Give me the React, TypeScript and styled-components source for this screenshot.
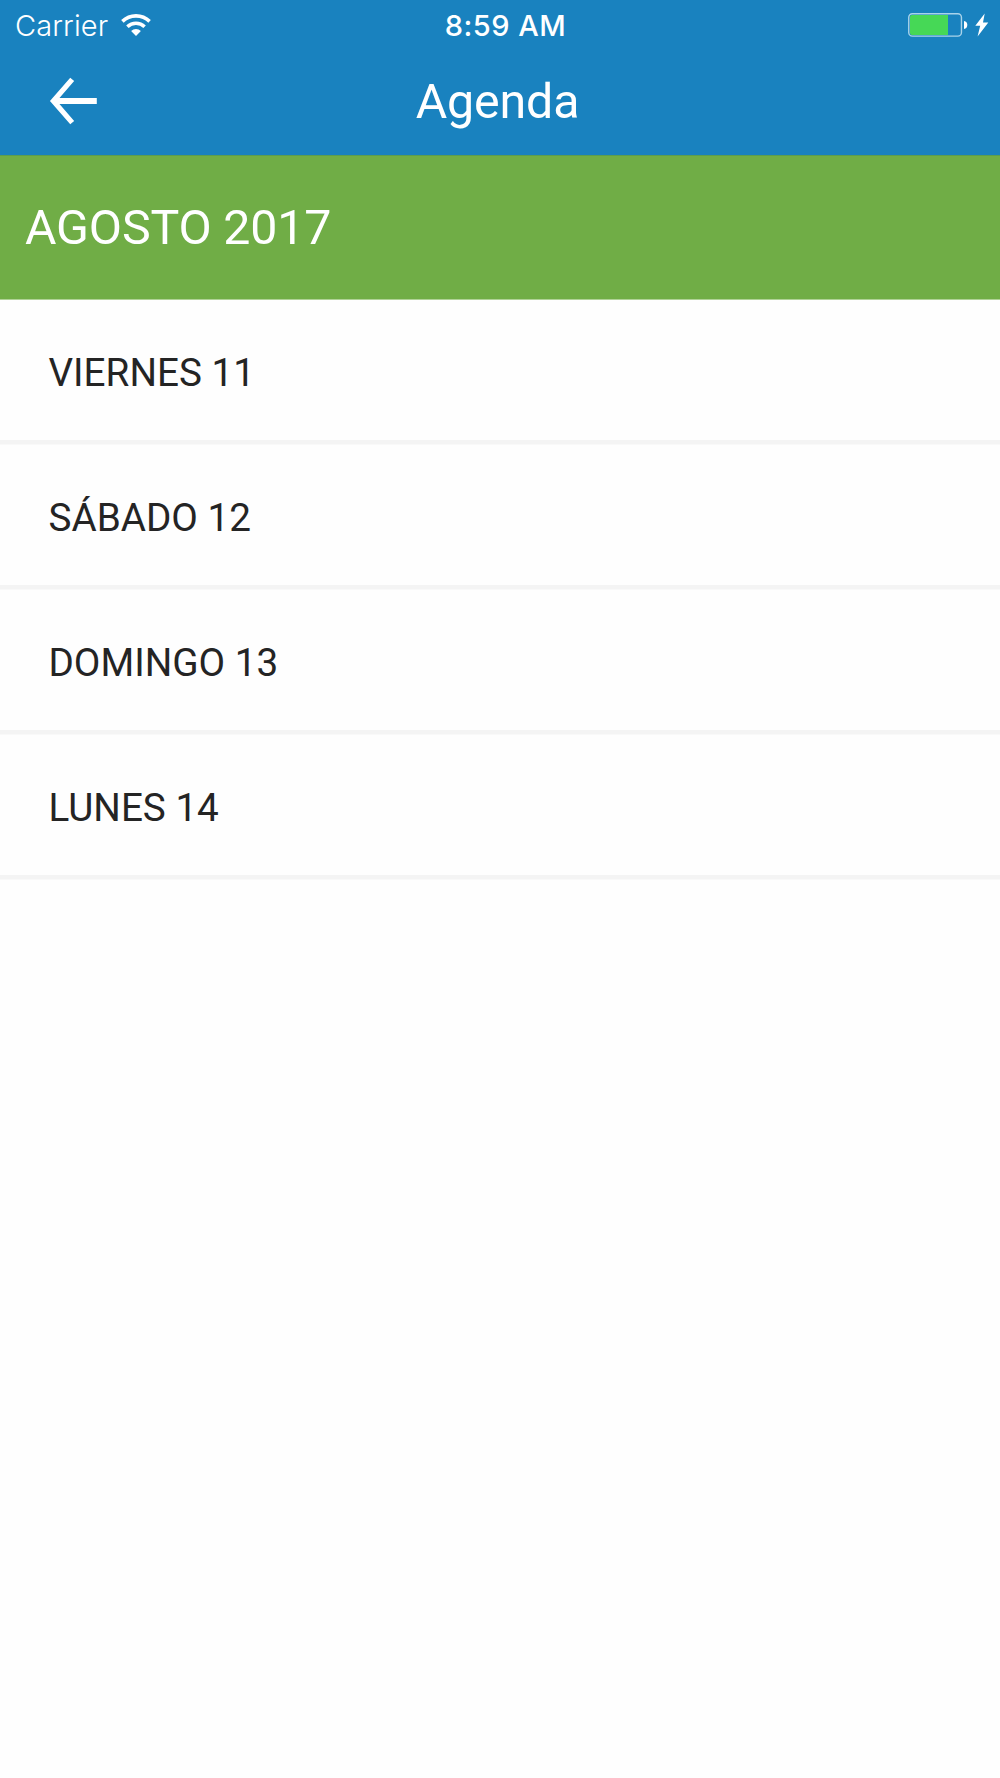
import React from "react";
import styled, { createGlobalStyle } from "styled-components";

const GlobalStyle = createGlobalStyle`
  body {
    margin: 0;
    background: #fefefe;
    font-family: Roboto, "Liberation Sans", sans-serif;
  }
`;

const Screen = styled.div`
  width: 100%;
  min-height: 1778px;
  background: #fefefe;
`;

const TopBar = styled.header`
  height: 155px;
  box-sizing: border-box;
  background: #1982bf;
  color: #fff;
`;

const StatusBar = styled.div`
  display: grid;
  grid-template-columns: 1fr auto 1fr;
  align-items: center;
  height: 50px;
  padding: 0 11px 0 15px;
  font-family: Inter, sans-serif;
  font-size: 29px;
  line-height: 48px;
`;

const StatusGroup = styled.div<{ $end?: boolean }>`
  display: flex;
  align-items: center;
  justify-content: ${(p) => (p.$end ? "flex-end" : "flex-start")};
  gap: ${(p) => (p.$end ? "7px" : "13px")};
  height: 50px;
`;

const Carrier = styled.span`
  padding-top: 2px;
  font-weight: 300;
  letter-spacing: 0.1px;
`;

const Clock = styled.span`
  font-weight: 500;
  letter-spacing: 0.5px;
  padding: 2px 0 0 7px;
`;

const NavBar = styled.div`
  display: grid;
  grid-template-columns: 1fr auto 1fr;
  align-items: center;
  height: 105px;
`;

const BackButton = styled.button`
  display: flex;
  width: 50px;
  margin: 0 0 3px 48px;
  padding: 0;
  border: 0;
  background: none;
  color: inherit;
`;

const Title = styled.h1`
  margin: 0 5px 1px 0;
  font-size: 48.3px;
  font-weight: 400;
  line-height: 60px;
  letter-spacing: -0.15px;
`;

const MonthHeader = styled.h2`
  display: flex;
  align-items: center;
  box-sizing: border-box;
  height: 144px;
  margin: 0;
  padding: 2px 0 0 25px;
  background: #70ad46;
  box-shadow: 0 1px 0 #b0d297, inset 0 1px 0 #5a9d50;
  color: #fff;
  font-size: 48.3px;
  font-weight: 400;
  line-height: 60px;
  letter-spacing: -0.15px;
`;

const DayList = styled.ul`
  margin: 0;
  padding: 0;
  list-style: none;
`;

const DayRow = styled.li`
  display: flex;
  align-items: center;
  box-sizing: border-box;
  height: 145px;
  padding: 6px 48.5px 0;
  border-bottom: 4px solid #f4f4f4;
  box-shadow: 0 1px 0 #f9f9f9;
  color: #242424;
  font-size: 38.65px;
  line-height: 46px;
`;

const days = ["VIERNES 11", "SÁBADO 12", "DOMINGO 13", "LUNES 14"];

const WifiIcon = () => (
  <svg width="30" height="22" viewBox="0 0 30 22" fill="none" stroke="#fff">
    <path d="M1.4 7.4 A19.5 19.5 0 0 1 28.6 7.4" strokeWidth="3.6" />
    <path d="M6.4 12.7 A12.2 12.2 0 0 1 23.6 12.7" strokeWidth="3.5" />
    <path d="M15 22 L10.1 16.9 A7 7 0 0 1 19.9 16.9 Z" fill="#fff" stroke="none" />
  </svg>
);

const BatteryIcon = () => (
  <svg width="60" height="24" viewBox="0 0 60 24">
    <rect x="0.75" y="0.75" width="52.7" height="22.4" rx="3.6" fill="none" stroke="#a9d3ea" strokeWidth="1.4" />
    <path d="M2 4 Q2 2 4 2 H40 V22 H4 Q2 22 2 20 Z" fill="#46d856" />
    <path d="M56 8 Q59.3 8.6 59.3 12 Q59.3 15.4 56 16 Z" fill="#fff" />
  </svg>
);

const ChargingIcon = () => (
  <svg width="14" height="24" viewBox="0 0 14 24">
    <path d="M9.7 0.6 L0.3 12.8 H5.2 L2.6 23.5 L13.3 9.4 H8 Z" fill="#fff" />
  </svg>
);

const BackIcon = () => (
  <svg width="50" height="48" viewBox="0 0 50 48" fill="none" stroke="#fff" strokeWidth="5.2">
    <path d="M24.2 2.4 L5.4 24 L24.2 45.6" strokeLinejoin="miter" />
    <path d="M6 24 H48.8" strokeWidth="6" />
  </svg>
);

export default function App() {
  return (
    <Screen>
      <GlobalStyle />
      <TopBar>
        <StatusBar>
          <StatusGroup>
            <Carrier>Carrier</Carrier>
            <WifiIcon />
          </StatusGroup>
          <Clock>8:59 AM</Clock>
          <StatusGroup $end>
            <BatteryIcon />
            <ChargingIcon />
          </StatusGroup>
        </StatusBar>
        <NavBar>
          <BackButton aria-label="Atrás">
            <BackIcon />
          </BackButton>
          <Title>Agenda</Title>
        </NavBar>
      </TopBar>
      <MonthHeader>AGOSTO 2017</MonthHeader>
      <DayList>
        {days.map((day) => (
          <DayRow key={day}>{day}</DayRow>
        ))}
      </DayList>
    </Screen>
  );
}
